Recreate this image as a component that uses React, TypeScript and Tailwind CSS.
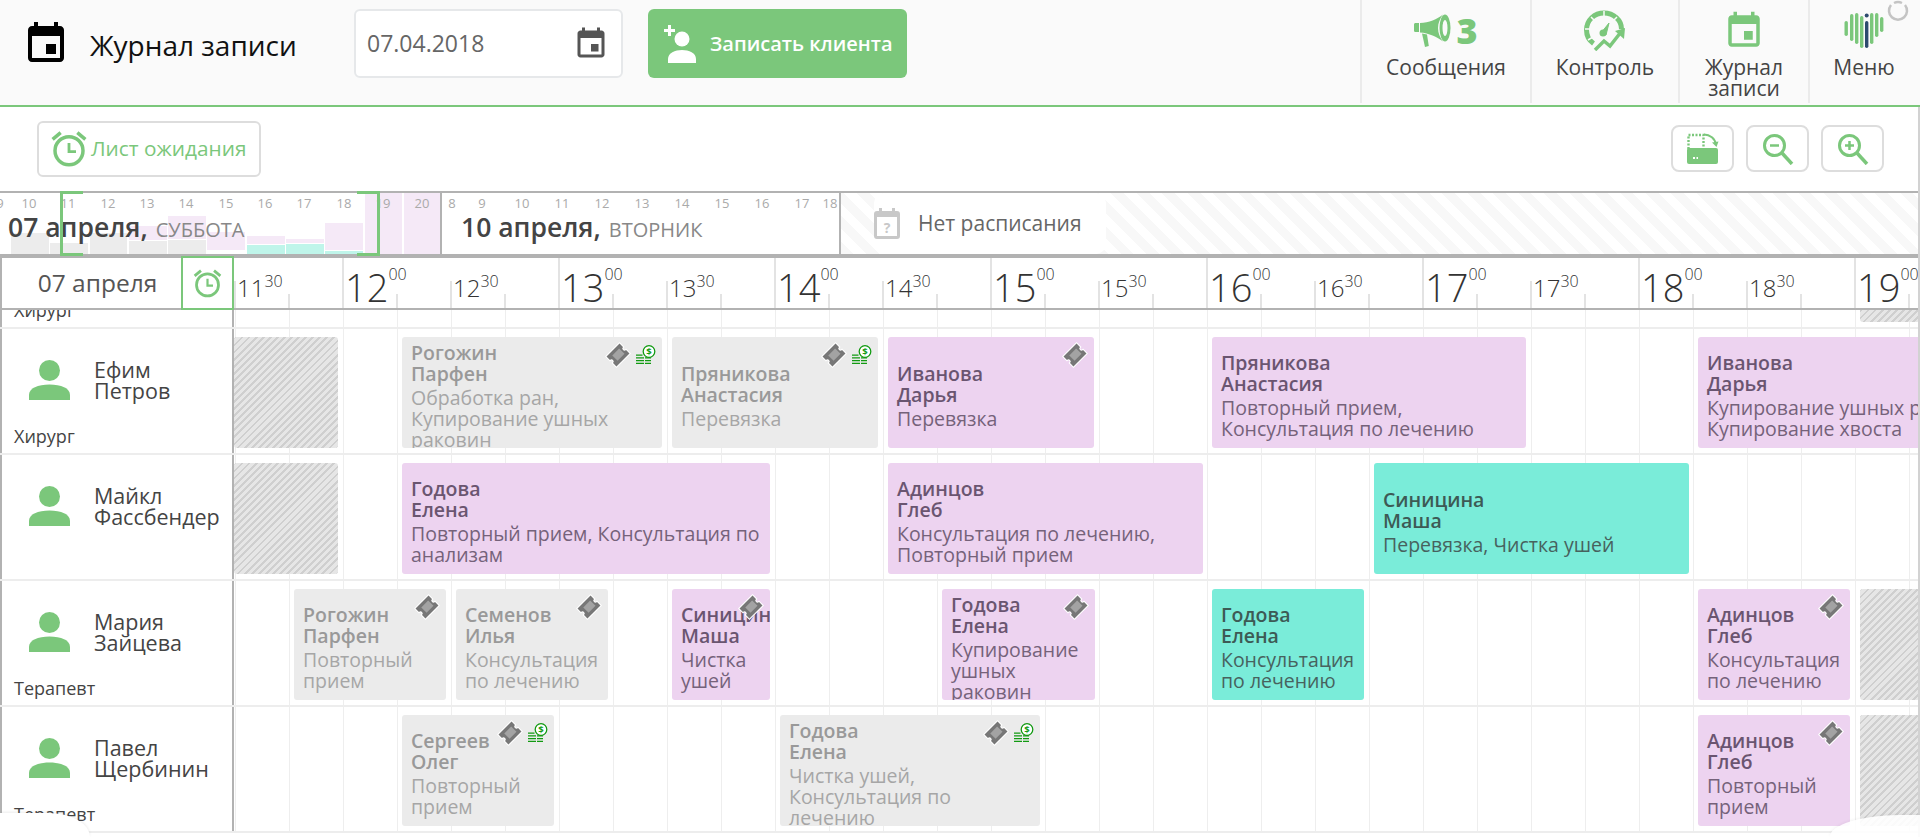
import { ReactNode } from "react";

type Kind = "gray" | "pink" | "teal";

interface Visit {
    from: number;
    to: number;
    kind: Kind;
    names: string[];
    desc?: string;
    ticket?: boolean;
    money?: boolean;
}

interface Block {
    from: number;
    to: number;
}

interface Doctor {
    name: string[];
    role?: string;
    visits: Visit[];
    blocks: Block[];
}

const TRACK_START = 234;

const doctors: Doctor[] = [
    { name: ["Иван", "Смирнов"], role: "Хирург", visits: [], blocks: [{ from: 1860, to: 1920 }] },
    {
        name: ["Ефим", "Петров"],
        role: "Хирург",
        blocks: [{ from: 234, to: 338 }],
        visits: [
            { from: 402, to: 662, kind: "gray", names: ["Рогожин", "Парфен"], desc: "Обработка ран, Купирование ушных раковин", ticket: true, money: true },
            { from: 672, to: 878, kind: "gray", names: ["Пряникова", "Анастасия"], desc: "Перевязка", ticket: true, money: true },
            { from: 888, to: 1094, kind: "pink", names: ["Иванова", "Дарья"], desc: "Перевязка", ticket: true },
            { from: 1212, to: 1526, kind: "pink", names: ["Пряникова", "Анастасия"], desc: "Повторный прием, Консультация по лечению" },
            { from: 1698, to: 2100, kind: "pink", names: ["Иванова", "Дарья"], desc: "Купирование ушных раковин, Купирование хвоста" },
        ],
    },
    {
        name: ["Майкл", "Фассбендер"],
        blocks: [{ from: 234, to: 338 }],
        visits: [
            { from: 402, to: 770, kind: "pink", names: ["Годова", "Елена"], desc: "Повторный прием, Консультация по анализам" },
            { from: 888, to: 1203, kind: "pink", names: ["Адинцов", "Глеб"], desc: "Консультация по лечению, Повторный прием" },
            { from: 1374, to: 1689, kind: "teal", names: ["Синицина", "Маша"], desc: "Перевязка, Чистка ушей" },
        ],
    },
    {
        name: ["Мария", "Зайцева"],
        role: "Терапевт",
        blocks: [{ from: 1860, to: 1920 }],
        visits: [
            { from: 294, to: 446, kind: "gray", names: ["Рогожин", "Парфен"], desc: "Повторный прием", ticket: true },
            { from: 456, to: 608, kind: "gray", names: ["Семенов", "Илья"], desc: "Консультация по лечению", ticket: true },
            { from: 672, to: 770, kind: "pink", names: ["Синицина", "Маша"], desc: "Чистка ушей", ticket: true },
            { from: 942, to: 1095, kind: "pink", names: ["Годова", "Елена"], desc: "Купирование ушных раковин", ticket: true },
            { from: 1212, to: 1364, kind: "teal", names: ["Годова", "Елена"], desc: "Консультация по лечению" },
            { from: 1698, to: 1850, kind: "pink", names: ["Адинцов", "Глеб"], desc: "Консультация по лечению", ticket: true },
        ],
    },
    {
        name: ["Павел", "Щербинин"],
        role: "Терапевт",
        blocks: [{ from: 1860, to: 1920 }],
        visits: [
            { from: 402, to: 554, kind: "gray", names: ["Сергеев", "Олег"], desc: "Повторный прием", ticket: true, money: true },
            { from: 780, to: 1040, kind: "gray", names: ["Годова", "Елена"], desc: "Чистка ушей, Консультация по лечению", ticket: true, money: true },
            { from: 1698, to: 1850, kind: "pink", names: ["Адинцов", "Глеб"], desc: "Повторный прием", ticket: true },
        ],
    },
];

const kindStyle: Record<Kind, { box: string; name: string; desc: string }> = {
    gray: { box: "bg-[#ebebeb]", name: "text-[#999999]", desc: "text-[#a6a6a6]" },
    pink: { box: "bg-[#edd3f0]", name: "text-[#6a5570]", desc: "text-[#75627a]" },
    teal: { box: "bg-[#7aecd9]", name: "text-[#3d5a55]", desc: "text-[#47625e]" },
};

const hours = ["11:30", "12:00", "12:30", "13:00", "13:30", "14:00", "14:30", "15:00", "15:30", "16:00", "16:30", "17:00", "17:30", "18:00", "18:30", "19:00"];

// stacked load bars of the day strip, bottom to top in px
const bars: { teal?: number; gray?: number; pink?: number; skip?: number }[] = [
    { gray: 21 },
    { gray: 11 },
    { gray: 21 },
    { gray: 13, pink: 14 },
    { gray: 14, pink: 23 },
    { skip: 3, pink: 18 },
    { teal: 9, pink: 8 },
    { teal: 10, pink: 4 },
    { teal: 3, pink: 27 },
    { pink: 62 },
    { pink: 62 },
];

// hour label and the x of its centre inside the day panel
const firstDayHours: [string, number][] = [["9", 0], ["10", 29], ["11", 68], ["12", 108], ["13", 147], ["14", 186], ["15", 226], ["16", 265], ["17", 304], ["18", 344], ["19", 383], ["20", 422]];
const secondDayHours: [string, number][] = [["8", 10], ["9", 40], ["10", 80], ["11", 120], ["12", 160], ["13", 200], ["14", 240], ["15", 280], ["16", 320], ["17", 360], ["18", 388]];

function EventIcon({ className }: { className?: string }) {
    return (
        <svg viewBox="0 0 24 24" className={className} fill="currentColor">
            <path d="M17 12h-5v5h5v-5zM16 1v2H8V1H6v2H5c-1.11 0-1.99.9-1.99 2L3 19c0 1.1.89 2 2 2h14c1.1 0 2-.9 2-2V5c0-1.1-.9-2-2-2h-1V1h-2zm3 18H5V8h14v11z" />
        </svg>
    );
}

function AlarmIcon({ className }: { className?: string }) {
    return (
        <svg viewBox="0 0 24 24" className={className} fill="currentColor">
            <path d="M22 5.720l-4.600-3.860-1.290 1.530 4.600 3.860L22 5.720zM7.880 3.390L6.600 1.860 2 5.710l1.290 1.530 4.590-3.850z" />
            <circle cx="12" cy="13" r="8" fill="none" stroke="currentColor" strokeWidth="2" />
            <path d="M12 8.500v5h4" fill="none" stroke="currentColor" strokeWidth="1.600" />
        </svg>
    );
}

function PersonIcon({ className }: { className?: string }) {
    return (
        <svg viewBox="0 0 41 40" className={className} fill="currentColor">
            <circle cx="20.500" cy="10.500" r="10.500" />
            <path d="M0 40v-5c0-7 9-10.500 20.500-10.500S41 28 41 35v5z" />
        </svg>
    );
}

function PersonAddIcon({ className }: { className?: string }) {
    return (
        <svg viewBox="0 0 32 38" className={className} fill="currentColor">
            <path d="M4 0h3v4h4v3H7v4H4V7H0V4h4z" />
            <circle cx="18" cy="14" r="7.500" />
            <path d="M4 38v-4c0-6 7-9 14-9s14 3 14 9v4z" />
        </svg>
    );
}

function Ticket() {
    return (
        <svg viewBox="0 0 24 24" className="h-[26px] w-[26px]">
            <g transform="rotate(-45 12 12)">
                <path d="M3.500 5.500h17v4.500a2 2 0 0 0 0 4v4.500h-17V14a2 2 0 0 0 0-4z" fill="#777777" stroke="#ffffff" strokeWidth="2" paintOrder="stroke" />
                <rect x="8" y="8.500" width="9" height="7" fill="#a3a3a3" />
            </g>
        </svg>
    );
}

function Money() {
    return (
        <svg viewBox="0 0 21 20" className="h-[20px] w-[21px]">
            <circle cx="14" cy="6.500" r="5.800" fill="#ffffff" stroke="#129a12" strokeWidth="1.300" />
            <text x="14" y="10" textAnchor="middle" fontSize="9.500" fontWeight="700" fill="#129a12" fontFamily="Open Sans, sans-serif">$</text>
            <path d="M1 9.500h6.500v1.300H1zM1 12.300h8v1.300H1zM10 12.300h6v1.300h-6zM1 15h8v1.300H1zM10 15h6v1.300h-6zM1 17.700h8V19H1zM10 17.700h6V19h-6z" fill="#129a12" />
        </svg>
    );
}

function MegaphoneIcon() {
    return (
        <svg viewBox="0 0 37 33" className="h-[33px] w-[37px]" fill="#7bc77b">
            <path d="M0 10.500c0-1 .8-1.500 1.600-1.500H5v9H1.600C.8 18 0 17.500 0 16.500z" />
            <path d="M6 9c9-.5 17-3.500 23-8.500-3 4-5 8.500-5 13.500s2 9.500 5 13.500C23 23 15 19 6 18.500z" />
            <ellipse cx="31" cy="14" rx="5.500" ry="13.500" />
            <ellipse cx="31" cy="14" rx="2.500" ry="8" fill="#fafafa" />
            <path d="M8 19.500l5 1 1.800 11.500-3.800 1z" />
        </svg>
    );
}

function GaugeIcon() {
    return (
        <svg viewBox="0 0 43 41" className="h-[41px] w-[43px]" fill="none" stroke="#7bc77b">
            <path d="M9.500 33.500C4.500 30 2.500 25 2.500 20 2.500 10 10.500 3 20 3S37.500 10 37.500 19" strokeWidth="5" />
            <path d="M20 1v7M1 19h7M7 7l5 5M33 7l-5 5M4 30l5-3" stroke="#fafafa" strokeWidth="1.500" />
            <path d="M17 23l8-10-3 12z" fill="#7bc77b" strokeWidth="1" />
            <circle cx="19" cy="23" r="3.500" fill="#7bc77b" strokeWidth="0" />
            <path d="M11 40l9-9 6 5 11-14" strokeWidth="3.500" />
            <path d="M31 21l10-3-1 11z" fill="#7bc77b" strokeWidth="0" />
        </svg>
    );
}

function HeartIcon() {
    const lines = [
        { x: 1.500, y: 9, h: 15, c: "#7bc77b" },
        { x: 7, y: 2, h: 27, c: "#7bc77b" },
        { x: 12, y: 1, h: 31, c: "#7bc77b" },
        { x: 17, y: 4, h: 32, c: "#7bc77b" },
        { x: 22, y: 9, h: 27, c: "#2d4a6e" },
        { x: 27, y: 1, h: 31, c: "#7bc77b" },
        { x: 32, y: 1, h: 24, c: "#7bc77b" },
        { x: 37, y: 5, h: 15, c: "#7bc77b" },
    ];
    return (
        <svg viewBox="0 0 42 37" className="h-[37px] w-[42px]">
            {lines.map((l) => (
                <rect key={l.x} x={l.x} y={l.y} width="3.400" height={l.h} rx="1.700" fill={l.c} />
            ))}
            <circle cx="23.700" cy="3.500" r="2" fill="#2d4a6e" />
        </svg>
    );
}

function ToolButton({ children }: { children: ReactNode }) {
    return (
        <button className="flex h-[47px] w-[63px] items-center justify-center rounded-[8px] border-2 border-[#dddddd] bg-white">
            {children}
        </button>
    );
}

function NavItem({ width, icon, label }: { width: string; icon: ReactNode; label: string[] }) {
    return (
        <div className={`flex h-[103px] flex-col items-center border-l-2 border-[#ebebeb] ${width}`}>
            <div className="flex h-[57px] items-center gap-[5px] pt-[4px]">{icon}</div>
            <div className="text-center text-[21px] leading-[21px] text-[#444444]">
                {label.map((l) => (
                    <div key={l}>{l}</div>
                ))}
            </div>
        </div>
    );
}

function TopBar() {
    return (
        <header className="flex h-[107px] shrink-0 items-start border-b-2 border-[#7bc77b] bg-[#fafafa] pr-[2px]">
            <EventIcon className="ml-[22px] mt-[20px] h-[48px] w-[48px] text-black" />
            <div className="ml-[20px] mt-[24px] w-[207px] whitespace-nowrap text-[28px] leading-[42px] text-[#111111]">Журнал записи</div>
            <div className="ml-[57px] mt-[9px] flex h-[69px] w-[269px] items-center justify-between rounded-[6px] border-2 border-[#e6e8ea] bg-white pl-[11px] pr-[12px] text-[23px] text-[#666666]">
                <span>07.04.2018</span>
                <EventIcon className="h-[36px] w-[36px] text-[#555555]" />
            </div>
            <button className="ml-[25px] mt-[9px] flex h-[69px] w-[259px] items-center rounded-[6px] bg-[#7bc77b] pl-[16px] text-[20px] font-semibold text-white">
                <PersonAddIcon className="h-[38px] w-[32px]" />
                <span className="ml-[14px]">Записать клиента</span>
            </button>
            <div className="ml-auto flex">
                <NavItem
                    width="w-[170px]"
                    label={["Сообщения"]}
                    icon={
                        <>
                            <MegaphoneIcon />
                            <span className="text-[36px] font-extrabold leading-none text-[#7bc77b]">3</span>
                        </>
                    }
                />
                <NavItem width="w-[148px]" label={["Контроль"]} icon={<GaugeIcon />} />
                <NavItem width="w-[130px]" label={["Журнал", "записи"]} icon={<EventIcon className="h-[42px] w-[42px] text-[#7bc77b]" />} />
                <NavItem width="w-[110px]" label={["Меню"]} icon={<HeartIcon />} />
            </div>
        </header>
    );
}

function Toolbar() {
    return (
        <div className="flex h-[84px] shrink-0 items-start justify-between pl-[37px] pr-[36px]">
            <button className="mt-[14px] flex h-[56px] w-[224px] items-center rounded-[6px] border-2 border-[#dddddd] pl-[9px] text-[20.800px] text-[#7bc77b]">
                <AlarmIcon className="h-[44px] w-[42px]" />
                <span className="ml-[1px] whitespace-nowrap">Лист ожидания</span>
            </button>
            <div className="mt-[18px] flex gap-[12px]">
                <ToolButton>
                    <svg viewBox="0 0 32 31" className="h-[31px] w-[32px]" fill="none" stroke="#7bc77b">
                        <path d="M1.500 16V2h15v14" strokeWidth="2.400" strokeDasharray="2 1.500" />
                        <path d="M17 1.500c6 0 11 4 12 10" strokeWidth="2" />
                        <path d="M25 9.500l4.500 4.500 2-5.500z" fill="#7bc77b" strokeWidth="0" />
                        <rect x="0" y="15" width="31" height="16" rx="2" fill="#7bc77b" strokeWidth="0" />
                        <path d="M6 25h5" stroke="#ffffff" strokeWidth="2" strokeDasharray="2 1.500" />
                    </svg>
                </ToolButton>
                <ToolButton>
                    <svg viewBox="0 0 32 32" className="h-[32px] w-[32px]" fill="none" stroke="#7bc77b">
                        <circle cx="12.500" cy="12.500" r="10" strokeWidth="3" />
                        <path d="M20 20l10 11" strokeWidth="3.500" />
                        <path d="M8 12.500h9" strokeWidth="2.500" />
                    </svg>
                </ToolButton>
                <ToolButton>
                    <svg viewBox="0 0 32 32" className="h-[32px] w-[32px]" fill="none" stroke="#7bc77b">
                        <circle cx="12.500" cy="12.500" r="10" strokeWidth="3" />
                        <path d="M20 20l10 11" strokeWidth="3.500" />
                        <path d="M8 12.500h9M12.500 8v9" strokeWidth="2.500" />
                    </svg>
                </ToolButton>
            </div>
        </div>
    );
}

function HourLabels({ items }: { items: [string, number][] }) {
    return (
        <>
            {items.map(([h, x]) => (
                <span
                    key={h}
                    className="absolute top-[1px] -translate-x-1/2 text-[13px] leading-[18px] text-[#aaaaaa]"
                    style={{ left: x }}
                >
                    {h}
                </span>
            ))}
        </>
    );
}

function DayTitle({ date, weekday, left }: { date: string; weekday: string; left: string }) {
    return (
        <div className={`absolute top-[14px] whitespace-nowrap text-[#444444] ${left}`}>
            <span className="text-[26.500px] font-semibold leading-[40px]">{date}</span>
            <span className="ml-[8px] text-[20px] text-[#888888]">{weekday}</span>
        </div>
    );
}

function DayStrip() {
    return (
        <div className="flex h-[65px] shrink-0 border-y-2 border-[#b2b2b2] pr-[2px]">
            <div className="relative w-[442px] shrink-0 overflow-hidden border-r-2 border-[#b2b2b2]">
                <div className="absolute bottom-0 left-[11px] flex items-end gap-[1.500px]">
                    {bars.map((b, i) => (
                        <div key={i} className="flex w-[37.800px] flex-col gap-[1px]">
                            {b.pink && <div className="bg-[#f5e9f7]" style={{ height: b.pink }} />}
                            {b.teal && <div className="bg-[#bff5ea]" style={{ height: b.teal }} />}
                            {b.gray && <div className="bg-[#ececec]" style={{ height: b.gray }} />}
                            {b.skip && <div style={{ height: b.skip }} />}
                        </div>
                    ))}
                </div>
                <HourLabels items={firstDayHours} />
                <DayTitle date="07 апреля," weekday="СУББОТА" left="left-[8px]" />
            </div>
            <div className="relative w-[399px] shrink-0 border-r-2 border-[#b2b2b2]">
                <HourLabels items={secondDayHours} />
                <DayTitle date="10 апреля," weekday="ВТОРНИК" left="left-[19px]" />
            </div>
            <div className="flex flex-1 items-center bg-[repeating-linear-gradient(45deg,#f8f8f8_0,#f8f8f8_9px,#ffffff_9px,#ffffff_18px)] pl-[33px]">
                <div className="flex h-full w-[232px] items-center rounded-[10px] bg-white">
                    <svg viewBox="0 0 26 31" className="h-[31px] w-[26px]" fill="#c8c8c8">
                        <path d="M5 0h3v3h10V0h3v3h2a3 3 0 0 1 3 3v22a3 3 0 0 1-3 3H3a3 3 0 0 1-3-3V6a3 3 0 0 1 3-3h2z" />
                        <rect x="3" y="9" width="20" height="19" fill="#ffffff" />
                        <text x="13" y="25" textAnchor="middle" fontSize="14" fontWeight="700" fill="#c8c8c8" fontFamily="Open Sans, sans-serif">?</text>
                    </svg>
                    <span className="ml-[18px] whitespace-nowrap text-[21px] text-[#666666]">Нет расписания</span>
                </div>
            </div>
        </div>
    );
}

function TimeCell({ label }: { label: string }) {
    const [h, m] = label.split(":");
    const major = m === "00";
    return (
        <div className="relative h-full w-[108px] shrink-0">
            <div className={`absolute bottom-0 left-0 w-[2px] bg-[#e3e3e3] ${major ? "h-full" : "h-[27px]"}`} />
            <div className="absolute bottom-0 left-[54px] h-[14px] w-[2px] bg-[#e3e3e3]" />
            {major ? (
                <div className="absolute left-[3px] top-[4px] flex items-start font-light text-[#333333]">
                    <span className="text-[38px] leading-[50px]">{h}</span>
                    <span className="pt-[1px] text-[16px] leading-[22px]">{m}</span>
                </div>
            ) : (
                <div className="absolute left-[3px] top-[9px] flex items-start font-light text-[#333333]">
                    <span className="text-[24px] leading-[42px]">{h}</span>
                    <span className="pt-[3px] text-[16px] leading-[22px]">{m}</span>
                </div>
            )}
        </div>
    );
}

function TimeHeader() {
    return (
        <div className="flex h-[54px] shrink-0 border-y-2 border-[#b2b2b2] bg-white">
            <div className="flex w-[234px] shrink-0 border-l-2 border-[#b2b2b2]">
                <div className="flex w-[179px] items-center justify-center whitespace-nowrap pl-[12px] pt-[1px] text-[24.500px] font-medium text-[#555555]">07 апреля</div>
                <div className="-my-[2px] flex w-[53px] items-center justify-center border-2 border-[#7bc77b] text-[#7bc77b]">
                    <AlarmIcon className="h-[33px] w-[33px]" />
                </div>
            </div>
            <div className="flex flex-1 overflow-hidden">
                {hours.map((h) => (
                    <TimeCell key={h} label={h} />
                ))}
            </div>
        </div>
    );
}

function VisitCard({ visit }: { visit: Visit }) {
    const s = kindStyle[visit.kind];
    return (
        <div
            className={`absolute bottom-[5px] top-[8px] flex flex-col justify-center overflow-hidden rounded-[3px] pl-[9px] pr-[8px] pt-[6px] text-[19.500px] leading-[21px] ${s.box}`}
            style={{ left: visit.from - TRACK_START, width: visit.to - visit.from }}
        >
            <div className={`whitespace-nowrap font-semibold ${s.name}`}>
                {visit.names.map((n) => (
                    <div key={n}>{n}</div>
                ))}
            </div>
            <div className={`mt-[3px] ${s.desc}`}>{visit.desc}</div>
            {(visit.ticket || visit.money) && (
                <div className="absolute right-[6px] top-[5px] flex items-center gap-[4px]">
                    {visit.ticket && <Ticket />}
                    {visit.money && <Money />}
                </div>
            )}
        </div>
    );
}

function DoctorRow({ doctor }: { doctor: Doctor }) {
    return (
        <div className="flex h-[126px] border-b-2 border-[#ededed]">
            <div className="flex w-[234px] shrink-0 flex-col border-x-2 border-x-[#b2b2b2] bg-white pt-[31px]">
                <div className="flex pl-[27px]">
                    <PersonIcon className="h-[40px] w-[41px] text-[#7bc77b]" />
                    <div className="-mt-[1px] ml-[24px] text-[21.500px] leading-[21px] text-[#444444]">
                        {doctor.name.map((n) => (
                            <div key={n}>{n}</div>
                        ))}
                    </div>
                </div>
                {doctor.role && <div className="ml-[12px] mt-auto pb-[6px] text-[18px] leading-[22px] text-[#444444]">{doctor.role}</div>}
            </div>
            <div className="relative flex-1 bg-[linear-gradient(90deg,#eeeeee_1px,transparent_1px)] bg-[length:54px_100%] bg-[position:1px_0]">
                {doctor.blocks.map((b) => (
                    <div
                        key={b.from}
                        className="absolute bottom-[5px] top-[8px] rounded-[3px] bg-[repeating-linear-gradient(135deg,#cfcfcf_0,#cfcfcf_2px,#e6e6e6_2px,#e6e6e6_5px)]"
                        style={{ left: b.from - TRACK_START, width: b.to - b.from }}
                    />
                ))}
                {doctor.visits.map((v) => (
                    <VisitCard key={v.from} visit={v} />
                ))}
            </div>
        </div>
    );
}

export default function App() {
    return (
        <div className="relative flex h-screen w-full flex-col overflow-hidden bg-white font-['Open_Sans',sans-serif]">
            <TopBar />
            <Toolbar />
            <DayStrip />

            {/* Selected range on the day strip */}
            <div className="absolute left-[60px] top-[191px] z-10 h-[65px] w-[320px] border-x-[3px] border-[#7bc77b]">
                <div className="absolute left-0 top-0 h-[3px] w-[20px] bg-[#7bc77b]" />
                <div className="absolute bottom-0 left-0 h-[3px] w-[20px] bg-[#7bc77b]" />
                <div className="absolute right-0 top-0 h-[3px] w-[20px] bg-[#7bc77b]" />
                <div className="absolute bottom-0 right-0 h-[3px] w-[20px] bg-[#7bc77b]" />
            </div>

            <TimeHeader />

            {/* Schedule is scrolled: the first row only shows its bottom edge */}
            <div className="min-h-0 flex-1 overflow-hidden">
                <div className="-mt-[107px]">
                    {doctors.map((d) => (
                        <DoctorRow key={d.name.join(" ")} doctor={d} />
                    ))}
                </div>
            </div>

            {/* Loader ring, page edge and the rounded corners over the schedule */}
            <svg viewBox="0 0 22 22" className="absolute right-[11px] top-0 h-[22px] w-[22px]" fill="none" stroke="#c4c4c4" strokeWidth="2.500">
                <path d="M4 5a9 9 0 1 0 14 0" />
                <path d="M7 3a9 9 0 0 1 8 0" />
            </svg>
            <div className="absolute bottom-0 right-0 top-[107px] w-[2px] bg-[#d2d2d2]" />
            <div className="absolute bottom-0 left-0 h-[24px] w-[90px] rounded-tr-[42px_24px] bg-white shadow-[0_-1px_3px_rgba(0,0,0,0.08)]" />
            <div className="absolute bottom-0 right-0 h-[22px] w-[90px] rounded-tl-[70px_22px] bg-white/90 shadow-[0_-1px_3px_rgba(0,0,0,0.05)]" />
        </div>
    );
}
